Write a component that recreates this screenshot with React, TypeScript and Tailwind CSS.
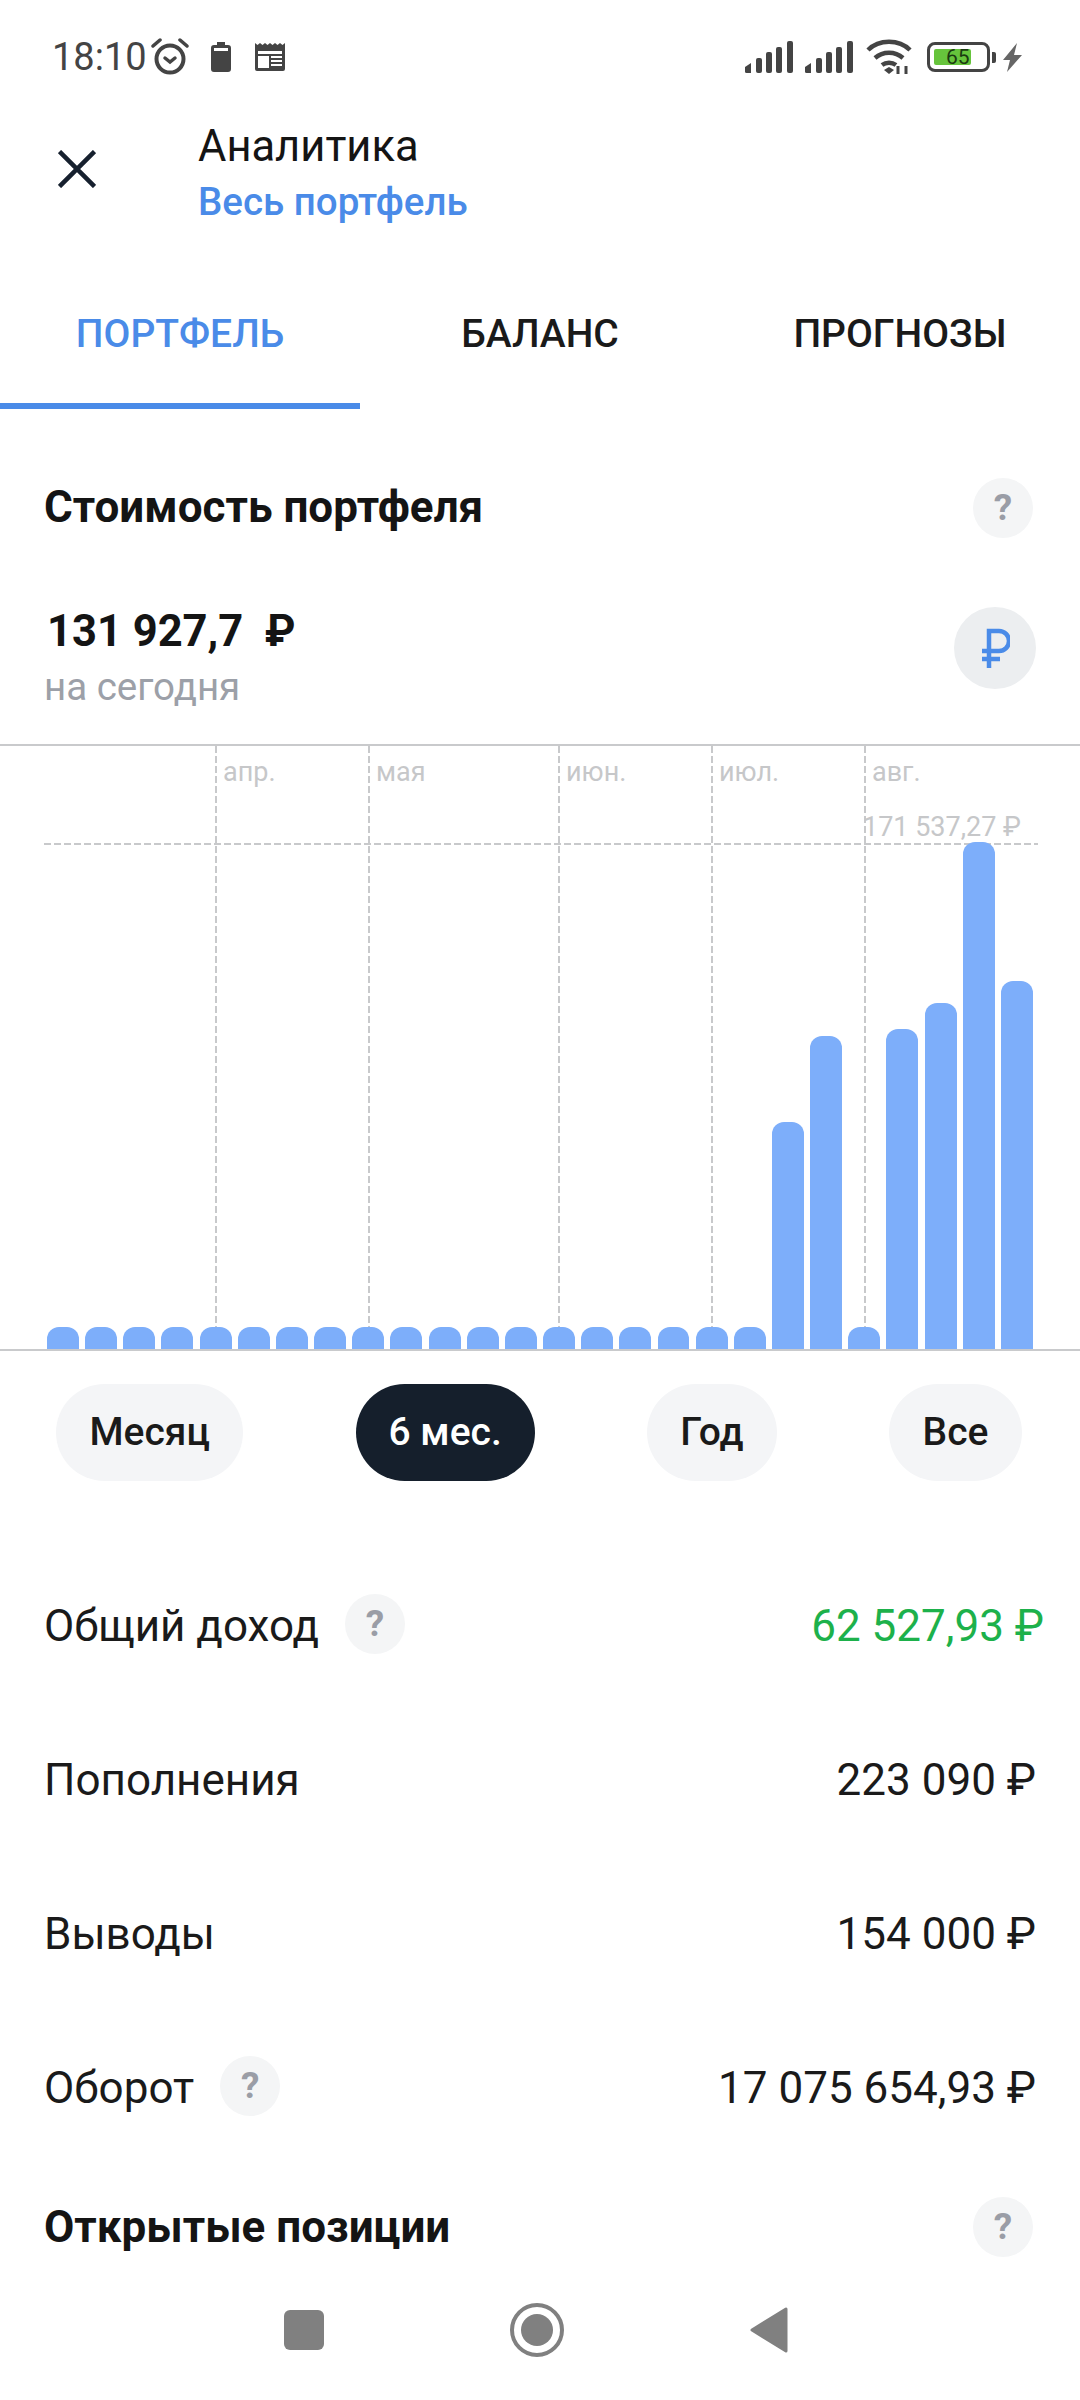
const bars = [22, 22, 22, 22, 22, 22, 22, 22, 22, 22, 22, 22, 22, 22, 22, 22, 22, 22, 22, 227, 313, 22, 320, 346, 507, 368];

const gridLines = [
  { x: 215, label: "апр." },
  { x: 368, label: "мая" },
  { x: 558, label: "июн." },
  { x: 711, label: "июл." },
  { x: 864, label: "авг." },
];

const periods = ["Месяц", "6 мес.", "Год", "Все"];

function Help({ className = "" }: { className?: string }) {
  return (
    <div className={`flex h-[60px] w-[60px] shrink-0 items-center justify-center rounded-full bg-[#f4f5f6] text-[37px] font-bold text-[#9a9da6] ${className}`}>
      ?
    </div>
  );
}

function Signal() {
  return (
    <svg width="48" height="32" viewBox="0 0 48 32" fill="#444">
      <path d="M0 26l6-4v10H1.500A1.500 1.500 0 0 1 0 30.500z" />
      <rect x="11" y="17" width="6" height="15" rx="2" />
      <rect x="21" y="11" width="6" height="21" rx="2" />
      <rect x="31" y="6" width="6" height="26" rx="2" />
      <rect x="42" y="0" width="6" height="32" rx="2" />
    </svg>
  );
}

function StatusBar() {
  return (
    <div className="flex h-[114px] items-center justify-between pl-[52px] pr-[58px] text-[#444]">
      <div className="flex items-center">
        <span className="text-[38px] leading-none">18:10</span>
        <svg className="ml-[4px]" width="38" height="38" viewBox="0 0 38 38" fill="none" stroke="#444" strokeLinecap="round">
          <circle cx="19" cy="21" r="13.500" strokeWidth="4" />
          <path d="M14 20l5 4 5-4" strokeWidth="3.500" />
          <path d="M2 8l7-6M36 8l-7-6" strokeWidth="3.500" />
        </svg>
        <svg className="ml-[22px]" width="20" height="30" viewBox="0 0 20 30" fill="#444">
          <path d="M6 0h8v3h3a3 3 0 0 1 3 3v21a3 3 0 0 1-3 3H3a3 3 0 0 1-3-3V6a3 3 0 0 1 3-3h3z" />
          <rect x="3" y="6" width="14" height="3" fill="#fff" />
        </svg>
        <svg className="ml-[24px]" width="30" height="28" viewBox="0 0 30 28" fill="#444">
          <path d="M0 0l2.500 2L5 0l2.500 2L10 0l2.500 2L15 0l2.500 2L20 0l2.500 2L25 0l2.500 2L30 0v26a2 2 0 0 1-2 2H2a2 2 0 0 1-2-2z" />
          <rect x="3" y="8" width="24" height="3" fill="#fff" />
          <rect x="3" y="13" width="11" height="12" fill="#fff" />
          <path d="M16 13h11v2H16zM16 17h11v2H16zM16 21h11v2H16z" fill="#fff" />
        </svg>
      </div>
      <div className="flex items-center">
        <Signal />
        <div className="ml-[12px]">
          <Signal />
        </div>
        <svg className="ml-[13px]" width="46" height="36" viewBox="0 0 46 36" fill="none" stroke="#444" strokeWidth="4.500">
          <path d="M2 11C13 0 33 0 44 11" />
          <path d="M9 19c8-7 20-7 28 0" />
          <path d="M16 26c4-3 10-3 14 0" />
          <path d="M18 31l5-3 5 3-5 4z" fill="#444" stroke="none" />
          <path d="M32 27v8M40 27v8" strokeWidth="3" />
        </svg>
        <div className="relative ml-[15px] flex h-[30px] w-[63px] items-center rounded-[8px] border-[3px] border-[#444] p-[4px]">
          <div className="h-full w-[37px] rounded-[2px] bg-[#66c43c]" />
          <span className="absolute left-[16px] top-[2px] text-[21px] leading-[21px] text-[#1a3a10]">65</span>
        </div>
        <div className="ml-[2px] h-[11px] w-[4px] rounded-r-[2px] bg-[#444]" />
        <svg className="ml-[7px]" width="19" height="29" viewBox="0 0 19 29" fill="#666">
          <path d="M14 0L0 17h7l-3 12 15-17h-8z" />
        </svg>
      </div>
    </div>
  );
}

function Chart() {
  return (
    <div className="relative h-[607px] border-y-2 border-[#c9cacc]">
      {gridLines.map((line) => (
        <div key={line.x} className="absolute bottom-0 top-0" style={{ left: line.x }}>
          <div className="h-full w-[2px] bg-[repeating-linear-gradient(to_bottom,#c8c9cb_0_7px,transparent_7px_10px)]" />
          <span className="absolute left-[8px] top-[10px] text-[27px] leading-[32px] text-[#c6c7c9]">{line.label}</span>
        </div>
      ))}
      <div className="absolute left-[44px] right-[42px] top-[97px] h-[2px] bg-[repeating-linear-gradient(to_right,#c8c9cb_0_7px,transparent_7px_10px)]" />
      <span className="absolute right-[59px] top-[65px] text-[27px] leading-[32px] text-[#c6c7c9]">171 537,27 ₽</span>
      <div className="absolute inset-x-[47px] bottom-0 flex items-end gap-[6.200px]">
        {bars.map((height, index) => (
          <div key={index} className="flex-1 rounded-t-[12px] bg-[#7daefa]" style={{ height }} />
        ))}
      </div>
    </div>
  );
}

function Row({ label, value, help, green }: { label: string; value: string; help?: boolean; green?: boolean }) {
  return (
    <div className="flex h-[154px] items-center justify-between">
      <div className="flex items-center gap-[26px]">
        <span className="text-[44px] text-[#1a1a1a]">{label}</span>
        {help && <Help className="-mt-[4px]" />}
      </div>
      <span className={green ? "-mr-[8px] text-[44px] text-[#1db14b]" : "text-[44px] text-[#1a1a1a]"}>{value}</span>
    </div>
  );
}

export default function App() {
  return (
    <div className="h-[2400px] w-[1080px] overflow-hidden bg-white font-['Roboto',sans-serif]">
      <StatusBar />

      <div className="flex h-[116px] items-start">
        <svg className="ml-[58px] mt-[36px]" width="38" height="38" viewBox="0 0 38 38" stroke="#16202e" strokeWidth="4.500" fill="none">
          <path d="M1.500 1.500l35 35M36.500 1.500l-35 35" />
        </svg>
        <div className="ml-[102px] flex flex-col pt-[5px]">
          <span className="text-[43.500px] leading-[55px] text-[#141414]">Аналитика</span>
          <span className="text-[38.500px] font-medium leading-[56px] text-[#4a8be8]">Весь портфель</span>
        </div>
      </div>

      <div className="mt-[49px] grid h-[130px] grid-cols-3 text-[39px] font-medium text-[#1a1a1a]">
        <div className="flex items-start justify-center border-b-[6px] border-[#4a8be8] pt-[26px] text-[#4a8be8]">ПОРТФЕЛЬ</div>
        <div className="flex items-start justify-center pt-[26px]">БАЛАНС</div>
        <div className="flex items-start justify-center pt-[26px]">ПРОГНОЗЫ</div>
      </div>

      <div className="mt-[67px] flex items-center justify-between pl-[44px] pr-[47px]">
        <h2 className="text-[44px] font-bold leading-[60px] text-[#141414]">Стоимость портфеля</h2>
        <Help className="mt-[2px]" />
      </div>

      <div className="mt-[67px] flex items-start justify-between pl-[44px] pr-[44px]">
        <div className="flex flex-col">
          <span className="pl-[3px] text-[43.500px] font-bold leading-[54px] text-[#141414]">131 927,7 &nbsp;₽</span>
          <span className="text-[38.500px] leading-[56px] text-[#9ca0a8]">на сегодня</span>
        </div>
        <div className="mt-[2px] flex h-[82px] w-[82px] items-center justify-center rounded-full bg-[#eceef0]">
          <svg width="30" height="40" viewBox="0 0 30 40" fill="none" stroke="#4a8be8" strokeWidth="4.500">
            <path d="M9 40V3h10a10 10 0 0 1 0 20H2M2 31h18" />
          </svg>
        </div>
      </div>

      <div className="mt-[29px]">
        <Chart />
      </div>

      <div className="mt-[33px] flex justify-between pl-[56px] pr-[58px]">
        {periods.map((period) => (
          <div
            key={period}
            className={
              period === "6 мес."
                ? "flex h-[97px] items-center rounded-full bg-[#151f2c] px-[33px] text-[39px] font-medium text-white"
                : "flex h-[97px] items-center rounded-full bg-[#f4f5f7] px-[33.500px] text-[39px] font-medium text-[#1a1a1a]"
            }
          >
            {period}
          </div>
        ))}
      </div>

      <div className="mt-[68px] pl-[44px] pr-[44px]">
        <Row label="Общий доход" value="62 527,93 ₽" help green />
        <Row label="Пополнения" value="223 090 ₽" />
        <Row label="Выводы" value="154 000 ₽" />
        <Row label="Оборот" value="17 075 654,93 ₽" help />
      </div>

      <div className="mt-[32px] flex items-center justify-between pl-[44px] pr-[47px]">
        <h2 className="text-[44px] font-bold leading-[60px] text-[#141414]">Открытые позиции</h2>
        <Help />
      </div>

      <div className="mt-[46px] flex items-center pl-[284px]">
        <div className="h-[40px] w-[40px] rounded-[6px] bg-[#808080]" />
        <div className="ml-[186px] flex h-[54px] w-[54px] items-center justify-center rounded-full border-[4px] border-[#808080]">
          <div className="h-[32px] w-[32px] rounded-full bg-[#808080]" />
        </div>
        <svg className="ml-[186px]" width="38" height="46" viewBox="0 0 38 46" fill="#808080" stroke="#808080" strokeWidth="3" strokeLinejoin="round">
          <path d="M36 2v42L2 23z" />
        </svg>
      </div>
    </div>
  );
}
